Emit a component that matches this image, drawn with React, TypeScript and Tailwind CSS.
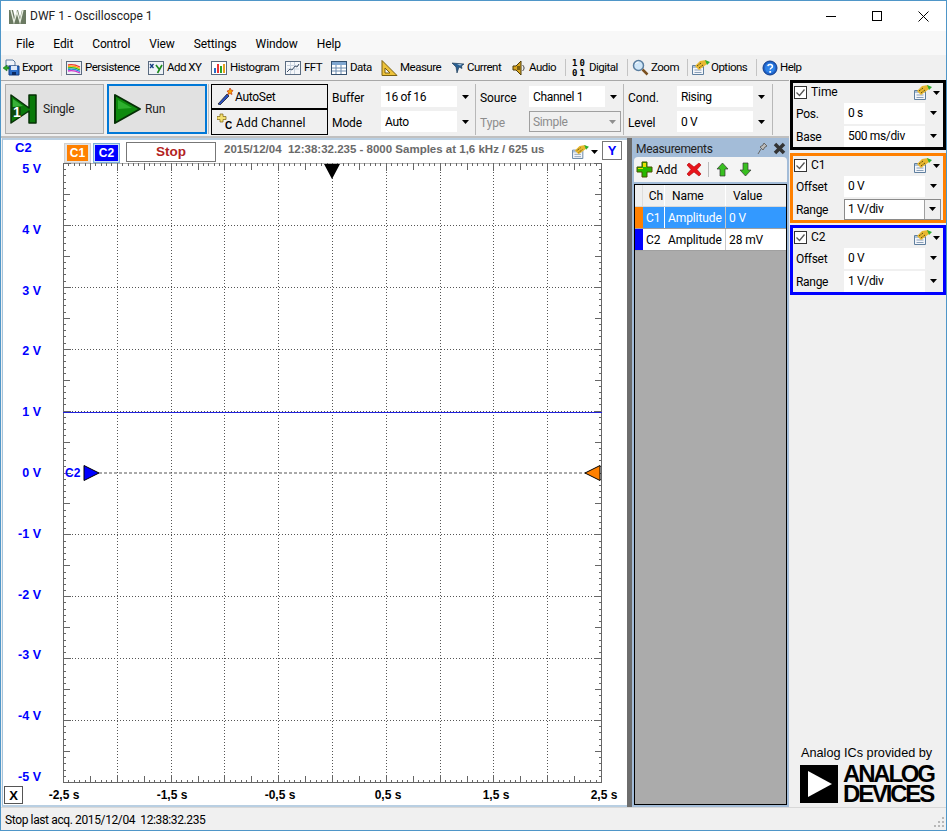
import React from "react";

const Arrow = () => (
  <svg width="7" height="4" viewBox="0 0 7 4"><path d="M0 0h7L3.500 4z" fill="#000" /></svg>
);

function Combo({ value, w = "w-[97px]", disabled = false, focus = false }: { value: string; w?: string; disabled?: boolean; focus?: boolean }) {
  return (
    <div className={`${w} h-[21px] flex items-center ${disabled ? "border border-[#a0a0a0] bg-[#f0f0f0]" : focus ? "border border-[#8a8a8a] bg-white" : "bg-white"}`}>
      <span className={`flex-1 whitespace-nowrap overflow-hidden ${disabled || focus ? "pl-[3px]" : "pl-[4px]"} text-[12px] leading-[18px] tracking-[-0.35px] ${disabled ? "text-[#8c8c8c]" : "text-black"}`}>{value}</span>
      <span className={`w-[16px] shrink-0 h-full flex items-center justify-center ${focus ? "border-l border-[#a0a0a0] bg-[#f0f0f0]" : disabled ? "opacity-40" : "bg-[#f0f0f0]"}`}>
        <Arrow />
      </span>
    </div>
  );
}

const Sep = () => <div className="w-px h-[17px] shrink-0 bg-[#c4c4c4]" />;

const OptionsIcon = ({ size = 18 }: { size?: number }) => (
  <svg width={size} height={Math.round((size * 15) / 18)} viewBox="0 0 18 15" className="shrink-0">
    <path d="M.5 5.500h11v9H.5z" fill="#f4f6fa" stroke="#5f7f9f" />
    <path d="M1 6h10v2H1z" fill="#a8bed6" />
    <path d="M2.500 10h7M2.500 12.500h7" stroke="#8aa0b8" />
    <path d="M3 6l5-5 6-1 1 4-4 3-4 3z" fill="#e8b830" />
    <path d="M5 6l4-3M7 8l4-3" stroke="#3c3208" strokeDasharray="1 1" />
    <path d="M13 0l5 2-3 3z" fill="#2fae2f" />
  </svg>
);

const ic: Record<string, React.ReactNode> = {
  export: (
    <svg width="17" height="17" viewBox="0 0 17 17">
      <path d="M3 1h7l2 2v4H3z" fill="#f2f5fa" stroke="#5c7ca0" />
      <path d="M6 7h10v9H6z" fill="#2a6cc8" stroke="#123c80" />
      <path d="M8 7h6v4H8z" fill="#dfe9f7" />
      <path d="M9 13h4v3H9z" fill="#0d2a60" />
      <path d="M0 9l4-3v2h2v2H4v2z" fill="#2aa52a" stroke="#0f5f0f" strokeWidth=".5" />
    </svg>
  ),
  persist: (
    <svg width="16" height="16" viewBox="0 0 16 16">
      <rect x=".5" y="1.500" width="15" height="13" fill="#eef1f5" stroke="#5a6b80" />
      <path d="M2 5c4-1 8 0 12 2" stroke="#e33" fill="none" strokeWidth="1.300" />
      <path d="M2 6.500c4-1 8 0 12 2" stroke="#fa0" fill="none" strokeWidth="1.300" />
      <path d="M2 8c4-1 8 0 12 2" stroke="#2b2" fill="none" strokeWidth="1.300" />
      <path d="M2 9.500c4-1 8 0 12 2" stroke="#28d" fill="none" strokeWidth="1.300" />
      <path d="M2 11c4-1 8 0 12 2" stroke="#c3c" fill="none" strokeWidth="1.300" />
    </svg>
  ),
  addxy: (
    <svg width="16" height="16" viewBox="0 0 16 16">
      <rect x=".5" y="1.500" width="15" height="13" fill="#eef2f7" stroke="#5a6b80" />
      <path d="M2 4l3.500 4M5.500 4L2 8" stroke="#123c80" strokeWidth="1.300" />
      <path d="M8 5l3 4M14 5l-4.500 8" stroke="#1c8a1c" strokeWidth="1.600" />
    </svg>
  ),
  hist: (
    <svg width="16" height="16" viewBox="0 0 16 16">
      <rect x=".5" y="1.500" width="15" height="13" fill="#fff" stroke="#5a6b80" />
      <path d="M3 8h2v5H3z" fill="#2a6cc8" />
      <path d="M6 4h2v9H6z" fill="#e33" />
      <path d="M9 6h2v7H9z" fill="#2aa52a" />
      <path d="M12 4h2v9h-2z" fill="#e8a020" />
    </svg>
  ),
  fft: (
    <svg width="16" height="16" viewBox="0 0 16 16">
      <rect x=".5" y="1.500" width="15" height="13" fill="#f5f7fa" stroke="#5a6b80" />
      <path d="M2 5.500h12M2 9h12M5.500 2v12M9.500 2v12" stroke="#c8d2de" />
      <path d="M2 12l3-3 2 1 3-4 2 1 2-3" stroke="#44546a" fill="none" />
    </svg>
  ),
  data: (
    <svg width="16" height="16" viewBox="0 0 16 16">
      <rect x=".5" y="1.500" width="15" height="13" fill="#fff" stroke="#34506e" />
      <path d="M1 2h14v3H1z" fill="#7fa6d0" />
      <path d="M1 8h14M1 11h14M5 5v9M10 5v9" stroke="#6c8cb0" />
    </svg>
  ),
  measure: (
    <svg width="17" height="16" viewBox="0 0 17 16">
      <path d="M1 .500v15h15z" fill="#edc23a" stroke="#7a6010" />
      <path d="M4 8v5h5z" fill="#f4f4f4" stroke="#7a6010" />
    </svg>
  ),
  current: (
    <svg width="14" height="14" viewBox="0 0 14 14">
      <path d="M1 2l12 1-2.500 2 .5 2.500-3-1.500-2 6-1-6z" fill="#2a5f92" stroke="#12304e" strokeWidth=".6" />
      <path d="M6 3l5 .500-2 1z" fill="#cfe4f4" />
    </svg>
  ),
  audio: (
    <svg width="14" height="16" viewBox="0 0 14 16">
      <path d="M1 6h3l5-5v14l-5-5H1z" fill="#d9a520" stroke="#4c3a08" />
      <path d="M10.500 5c2 2 2 4 0 6" stroke="#333" fill="none" />
      <path d="M5 6h3v4H5z" fill="#7c5f0e" />
    </svg>
  ),
  zoom: (
    <svg width="17" height="17" viewBox="0 0 17 17">
      <circle cx="6.500" cy="6.500" r="5" fill="#cfe6f8" stroke="#5a7ea0" strokeWidth="1.500" />
      <path d="M3.500 5a3.500 3.500 0 0 1 3-2" stroke="#fff" fill="none" />
      <path d="M10.500 10.500l5 5" stroke="#7a5020" strokeWidth="2.500" />
    </svg>
  ),
  help: (
    <svg width="16" height="16" viewBox="0 0 16 16">
      <circle cx="8" cy="8" r="7" fill="#1f62c9" stroke="#0f3c8a" />
      <circle cx="8" cy="8" r="5" fill="#2f83e8" />
      <path d="M5.800 6.200c.4-2.400 4.600-2.200 4.600.2 0 1.600-2.200 1.600-2.200 3.200" stroke="#fff" fill="none" strokeWidth="1.500" />
      <path d="M7.300 11h1.800v1.800H7.300z" fill="#fff" />
    </svg>
  ),
};

function Tool({ icon, label, w, cls, gap = "gap-[3px]" }: { icon: React.ReactNode; label: string; w: string; cls: string; gap?: string }) {
  return (
    <div className={`flex items-center ${gap} ${cls}`}>
      {icon}
      <span className={`${w} text-[11.5px] leading-none tracking-[-0.5px] text-black whitespace-nowrap`}>{label}</span>
    </div>
  );
}

function Checkbox() {
  return (
    <svg width="13" height="13" viewBox="0 0 13 13">
      <rect x=".5" y=".5" width="12" height="12" fill="#fff" stroke="#333" />
      <path d="M2.500 6.500l3 3 5-6" fill="none" stroke="#555" strokeWidth="1.300" />
    </svg>
  );
}

function ChannelPanel({ name, border, a, av, b, bv, focus }: { name: string; border: string; a: string; av: string; b: string; bv: string; focus?: boolean }) {
  return (
    <div className={`w-[156px] h-[70px] shrink-0 border-[3px] ${border} bg-[#f0f0f0] flex flex-col`}>
      <div className="h-[19px] flex items-center pl-[1px] pr-[3px]">
        <Checkbox />
        <span className="ml-[4px] -mt-[2px] flex-1 text-[12px] leading-none text-black">{name}</span>
        <OptionsIcon size={18} />
        <span className="ml-[1px]"><Arrow /></span>
      </div>
      <div className="flex items-center h-[22px] pl-[3px]">
        <span className="w-[48px] pt-[2px] text-[12px] leading-none tracking-[-0.3px] text-black">{a}</span>
        <Combo value={av} w="w-[97px]" />
      </div>
      <div className="flex items-center h-[22px] pl-[3px] mt-[1px]">
        <span className="w-[48px] pt-[1px] text-[12px] leading-none tracking-[-0.3px] text-black">{b}</span>
        <Combo value={bv} w="w-[97px]" focus={focus} />
      </div>
    </div>
  );
}

function Chart() {
  const W = 539;
  const H = 620;
  const dx = (W - 1) / 10;
  const dy = (H - 1) / 10;
  const ticks: string[] = [];
  const dots: string[] = [];
  for (let i = 0; i <= 100; i++) {
    const x = Math.round(i * (dx / 10)) + 0.5;
    const y = Math.round(i * (dy / 10)) + 0.5;
    const mj = i % 10 === 0;
    const l = mj ? 8 : i % 5 === 0 ? 7 : 3;
    ticks.push(`M${x} 0v${l}M${x} ${H}v-${l}M0 ${y}h${l}M${W} ${y}h-${l}`);
    if (mj && i > 0 && i < 100) {
      dots.push(`M${x} 0V${H}`);
      if (i !== 50) dots.push(`M0 ${y}H${W}`);
    }
  }
  return (
    <svg width={W} height={H} viewBox={`0 0 ${W} ${H}`} className="block">
      <path d={dots.join("")} stroke="#555" strokeDasharray="1 2" fill="none" />
      <path d={ticks.join("")} stroke="#666" fill="none" />
      <path d={`M0.500 0V${H - 0.5}H${W - 0.5}V0H0.500`} stroke="#666" fill="none" />
      <path d={`M0 249.500H${W}`} stroke="#2222dd" />
      <path d={`M36 310H${W - 16}`} stroke="#555" strokeDasharray="3 2" />
      <path d="M261 1h16l-8 15z" fill="#000" />
      <path d="M21 302.500l15 7.500-15 7.500z" fill="#0000ff" stroke="#000" />
      <path d="M537 302.500l-15 7.500 15 7.500z" fill="#ff8000" stroke="#000" />
    </svg>
  );
}

export default function App() {
  const yLabels = ["5 V", "4 V", "3 V", "2 V", "1 V", "0 V", "-1 V", "-2 V", "-3 V", "-4 V", "-5 V"];
  const xLabels = ["-2,5 s", "-1,5 s", "-0,5 s", "0,5 s", "1,5 s", "2,5 s"];
  return (
    <div className="w-[947px] h-[831px] flex flex-col bg-[#f0f0f0] border border-[#4f96c8] font-['Roboto',sans-serif] tracking-[-0.1px] overflow-hidden">
      {/* Title */}
      <div className="h-[30px] shrink-0 bg-white flex items-center pl-[8px]">
        <svg width="17" height="17" viewBox="0 0 17 17">
          <path d="M0 2h4l2 8 2-8h1l2 8 2-8h4v14H0z" fill="#6b7a62" />
          <path d="M2 2l3 12 3-10 3 10 3-12" fill="none" stroke="#e9efe2" strokeWidth="1.300" />
        </svg>
        <span className="ml-[4px] text-[12px] leading-none tracking-normal text-[#222]">DWF 1 - Oscilloscope 1</span>
        <div className="ml-auto flex items-center">
          <div className="w-[46px] h-[30px] flex items-center justify-center">
            <div className="w-[10px] h-px bg-black" />
          </div>
          <div className="w-[46px] h-[30px] flex items-center justify-center">
            <div className="w-[10px] h-[10px] border border-black" />
          </div>
          <div className="w-[46px] h-[30px] flex items-center justify-center">
            <svg width="11" height="11" viewBox="0 0 11 11"><path d="M.5.500l10 10M10.500.500l-10 10" stroke="#000" /></svg>
          </div>
        </div>
      </div>
      {/* Menu */}
      <div className="h-[24px] shrink-0 bg-[#f8f8f8] flex items-center pt-[1px] pl-[15px] gap-[19px] text-[12px] tracking-[-0.12px] text-black">
        {["File", "Edit", "Control", "View", "Settings", "Window", "Help"].map((m) => (
          <span key={m} className="leading-none">{m}</span>
        ))}
      </div>
      {/* Toolbar */}
      <div className="h-[25px] shrink-0 bg-[#f0f0f0] flex items-center pl-[2px]">
        <Tool icon={ic.export} label="Export" w="w-[29px]" cls="mr-[10px]" gap="gap-[2px]" />
        <Sep />
        <Tool icon={ic.persist} label="Persistence" w="w-[54px]" cls="ml-[4px] mr-[9px]" />
        <Tool icon={ic.addxy} label="Add XY" w="w-[36px]" cls="mr-[8px]" />
        <Tool icon={ic.hist} label="Histogram" w="w-[46px]" cls="mr-[9px]" />
        <Tool icon={ic.fft} label="FFT" w="w-[19px]" cls="mr-[8px]" />
        <Tool icon={ic.data} label="Data" w="w-[22px]" cls="mr-[9px]" />
        <Tool icon={ic.measure} label="Measure" w="w-[40px]" cls="mr-[11px]" gap="gap-[2px]" />
        <Tool icon={ic.current} label="Current" w="w-[34px]" cls="mr-[11px]" gap="gap-[2px]" />
        <Tool icon={ic.audio} label="Audio" w="w-[26px]" cls="mr-[10px]" />
        <Sep />
        <div className="flex items-center gap-[2px] mr-[10px] ml-[6px]">
          <div className="w-[15px] text-[9px] leading-[10px] font-bold tracking-[2px] font-['DejaVu_Sans_Mono',monospace] text-center">
            <div className="whitespace-nowrap">10</div>
            <div className="whitespace-nowrap">01</div>
          </div>
          <span className="w-[28px] text-[11.5px] leading-none tracking-[-0.5px]">Digital</span>
        </div>
        <Sep />
        <Tool icon={ic.zoom} label="Zoom" w="w-[26px]" cls="ml-[4px] mr-[10px]" gap="gap-[2px]" />
        <Sep />
        <Tool icon={<OptionsIcon size={18} />} label="Options" w="w-[35px]" cls="ml-[4px] mr-[10px]" gap="gap-[1px]" />
        <Sep />
        <Tool icon={ic.help} label="Help" w="w-[21px]" cls="ml-[5px]" gap="gap-[2px]" />
      </div>

      {/* Body */}
      <div className="flex-1 min-h-0 flex">
        <div className="w-[788px] shrink-0 flex flex-col">
          {/* Control strip */}
          <div className="h-[58px] shrink-0 flex items-center pt-[1px] pl-[4px] border-t border-[#a8a8a8] border-b-[2px] border-b-[#c0c0c0] bg-[#f0f0f0]">
            <div className="w-[99px] h-[50px] bg-[#e1e1e1] border border-[#adadad] flex items-center pl-[4px] gap-[5px]">
              <svg width="28" height="32" viewBox="0 0 28 32">
                <path d="M1 2l18 13V2h7v28h-7V18L1 30z" fill="#0a7a0a" stroke="#063006" strokeWidth="1.500" strokeLinejoin="round" />
                <path d="M3 6l10 7-10 1z" fill="#38b038" />
                <path d="M2 14h9v10H2z" fill="#0c4a0c" />
                <text x="3" y="24" fontSize="14" fontWeight="700" fill="#fff" fontFamily="Liberation Sans">1</text>
              </svg>
              <span className="text-[12px] leading-none tracking-[-0.2px] text-[#222]">Single</span>
            </div>
            <div className="ml-[3px] w-[100px] h-[50px] bg-[#e1e1e1] border-[2px] border-[#0078d7] flex items-center pl-[4px] gap-[3px]">
              <svg width="29" height="32" viewBox="0 0 29 32">
                <path d="M2 2l25 14L2 30z" fill="#0e8a0e" stroke="#063006" strokeWidth="2" strokeLinejoin="round" />
                <path d="M5 7l14 8-14 1z" fill="#2eb02e" />
              </svg>
              <span className="text-[12px] leading-none text-[#222]">Run</span>
            </div>
            <div className="ml-[1px] w-[1px] h-[50px] bg-[#c0c0c0]" />
            <div className="ml-[2px] w-[117px] h-[51px] border border-black bg-[#f0f0f0] flex flex-col">
              <div className="flex-1 flex items-center pl-[5px] gap-[1px] border-b-[2px] border-black">
                <svg width="17" height="18" viewBox="0 0 17 18">
                  <path d="M1 17L10 7l2 2-9 9z" fill="#2a4fc0" stroke="#111" strokeWidth=".7" />
                  <path d="M13 1l1 2 2 .5-1.500 2 .5 2-2-1-2 1 .3-2L10 4l2-.5z" fill="#f5a300" stroke="#c02000" strokeWidth=".6" />
                </svg>
                <span className="pt-[2px] text-[12px] leading-none tracking-[-0.3px]">AutoSet</span>
              </div>
              <div className="flex-1 flex items-center pl-[5px] gap-[4px]">
                <svg width="15" height="17" viewBox="0 0 15 17">
                  <path d="M3 1h3v2.500h3v3H6V9H3V6.500H0v-3h3z" fill="#f4e070" stroke="#7a6010" strokeWidth=".7" />
                  <text x="8" y="16" fontSize="10" fontWeight="700" fill="#000" fontFamily="Liberation Sans">C</text>
                </svg>
                <span className="pt-[2px] text-[12px] leading-none tracking-[0.15px]">Add Channel</span>
              </div>
            </div>
            <div className="ml-[2px] w-[146px] h-[51px] border-r border-[#b8b8b8] pl-[2px] flex flex-col justify-center gap-[4px]">
              <div className="flex items-center h-[21px]">
                <span className="w-[49px] pt-[2px] text-[12px] leading-none">Buffer</span>
                <Combo value="16 of 16" w="w-[92px]" />
              </div>
              <div className="flex items-center h-[21px]">
                <span className="w-[49px] pt-[2px] text-[12px] leading-none">Mode</span>
                <Combo value="Auto" w="w-[92px]" />
              </div>
            </div>
            <div className="w-[148px] h-[51px] border-r border-[#b8b8b8] pl-[4px] flex flex-col justify-center gap-[4px]">
              <div className="flex items-center h-[21px]">
                <span className="w-[49px] pt-[2px] text-[12px] leading-none">Source</span>
                <Combo value="Channel 1" w="w-[92px]" />
              </div>
              <div className="flex items-center h-[21px]">
                <span className="w-[49px] pt-[2px] text-[12px] leading-none text-[#8c8c8c]">Type</span>
                <Combo value="Simple" w="w-[92px]" disabled />
              </div>
            </div>
            <div className="w-[149px] h-[51px] border-r border-[#b8b8b8] pl-[4px] flex flex-col justify-center gap-[4px]">
              <div className="flex items-center h-[21px]">
                <span className="w-[49px] pt-[2px] text-[12px] leading-none">Cond.</span>
                <Combo value="Rising" w="w-[92px]" />
              </div>
              <div className="flex items-center h-[21px]">
                <span className="w-[49px] pt-[2px] text-[12px] leading-none">Level</span>
                <Combo value="0 V" w="w-[92px]" />
              </div>
            </div>
          </div>

          <div className="flex-1 min-h-0 flex">
            {/* Plot panel */}
            <div className="w-[625px] shrink-0 ml-px flex flex-col bg-white border-t-[2px] border-t-[#b9cfe2] border-l-[1px] border-l-[#a4c4dc] border-b-[2px] border-b-[#b9cfe2] font-['Liberation_Sans',sans-serif] tracking-normal">
              <div className="h-[23px] shrink-0 flex items-center">
                <span className="ml-[12px] -mt-[9px] w-[49px] text-[13px] font-bold text-[#0000ff] leading-none">C2</span>
                <span className="mt-[3px] w-[27px] h-[20px] bg-[#e4e4e4] border border-[#d0d0d0] flex items-center justify-center">
                  <span className="w-[21px] h-[16px] bg-[#ff8000] text-white text-[12px] font-bold flex items-center justify-center leading-none">C1</span>
                </span>
                <span className="mt-[3px] ml-[2px] w-[27px] h-[20px] border border-[#7ab0d8] bg-[#cfe2f2] flex items-center justify-center">
                  <span className="w-[23px] h-[16px] bg-[#0000ff] text-white text-[12px] font-bold flex items-center justify-center leading-none">C2</span>
                </span>
                <span className="ml-[6px] w-[90px] h-[20px] border border-[#777] text-[#b22222] text-[13.5px] font-bold flex items-center justify-center leading-none">Stop</span>
                <span className="ml-[8px] -mt-[4px] text-[11.5px] font-bold text-[#6a6a6a] leading-none whitespace-pre">2015/12/04  12:38:32.235 - 8000 Samples at 1,6 kHz / 625 us</span>
                <span className="ml-auto"><OptionsIcon size={17} /></span>
                <span className="ml-[2px]"><Arrow /></span>
                <span className="ml-[4px] mr-[5px] -mt-[3px] w-[20px] h-[19px] border border-[#777] text-[#0000ff] text-[13px] font-bold flex items-center justify-center leading-none">Y</span>
              </div>
              <div className="flex h-[620px] shrink-0">
                <div className="w-[38px] h-[624px] -mt-[2px] flex flex-col justify-between items-end text-[12.5px] font-bold text-[#0000ff]">
                  {yLabels.map((l) => (
                    <span key={l} className="h-[16px] leading-[16px] whitespace-nowrap">{l}</span>
                  ))}
                </div>
                <div className="ml-[22px] relative">
                  <Chart />
                  <span className="absolute left-[2px] top-[303px] text-[12px] font-bold text-[#0000ff] leading-[15px]">C2</span>
                </div>
              </div>
              <div className="flex items-start mt-[3px]">
                <span className="ml-px w-[19px] h-[18px] border border-[#555] text-[13px] font-bold flex items-center justify-center leading-none">X</span>
                <div className="ml-[23px] mt-[2px] flex gap-[72px] text-[12px] font-bold text-black">
                  {xLabels.map((l) => (
                    <span key={l} className="w-[36px] text-center leading-[14px] whitespace-nowrap">{l}</span>
                  ))}
                </div>
              </div>
            </div>
            <div className="w-[5px] shrink-0 bg-[#6d6d6d]" />
            {/* Measurements */}
            <div className="flex-1 min-w-0 flex flex-col bg-[#a3bcd8] px-[2px] pb-[2px]">
              <div className="h-[19px] shrink-0 flex items-center pl-[2px] pr-[1px] pt-[2px]">
                <span className="flex-1 text-[12px] leading-none tracking-[-0.3px] text-[#222]">Measurements</span>
                <svg width="11" height="13" viewBox="0 0 11 13"><path d="M7 1l3 3-2 1-2 3-3-3 3-2zM4 7l-3 5" stroke="#666" fill="#bbb" /></svg>
                <svg className="ml-[5px]" width="13" height="13" viewBox="0 0 13 13"><path d="M2 2l9 9M11 2l-9 9" stroke="#333" strokeWidth="3.500" /></svg>
              </div>
              <div className="h-[25px] shrink-0 bg-[#f4f4f4] rounded-t-[4px] flex items-center pl-[2px]">
                <svg width="17" height="17" viewBox="0 0 17 17"><path d="M6 1h5v5h5v5h-5v5H6v-5H1V6h5z" fill="#27b800" stroke="#4a5000" /><path d="M7 2h3v4H7zM2 7h5v1H2z" fill="#e8e000" /></svg>
                <span className="ml-[3px] text-[12px] leading-none text-black">Add</span>
                <svg className="ml-[9px]" width="16" height="15" viewBox="0 0 16 15"><path d="M3 1l5 4 5-4 2 2-4 4.500 4 4.500-2 2-5-4-5 4-2-2 4-4.500-4-4.500z" fill="#e8141c" stroke="#a00" strokeWidth=".6" /></svg>
                <div className="w-px h-[15px] bg-[#bbb] ml-[6px]" />
                <svg className="ml-[7px]" width="13" height="15" viewBox="0 0 13 15"><path d="M6.500 1l5.500 6H9v7H4V7H1z" fill="#38c020" stroke="#333" strokeWidth=".7" /></svg>
                <svg className="ml-[10px]" width="13" height="15" viewBox="0 0 13 15"><path d="M6.500 14L1 8h3V1h5v7h3z" fill="#38c020" stroke="#333" strokeWidth=".7" /></svg>
              </div>
              <div className="mt-[2px] flex-1 min-h-0 bg-[#ababab] border border-black">
                <div className="h-[22px] flex bg-[#f0f0f0] border-b border-[#d8d8d8] text-[12px] leading-none text-black">
                  <div className="w-[8px] border-r border-[#ddd]" />
                  <div className="w-[22px] flex items-center justify-end pr-px border-r border-white">Ch</div>
                  <div className="w-[61px] flex items-center pl-[7px] border-r border-white">Name</div>
                  <div className="flex-1 flex items-center pl-[7px]">Value</div>
                </div>
                {[
                  { c: "bg-[#ff8000]", ch: "C1", v: "0 V", sel: true },
                  { c: "bg-[#0000ff]", ch: "C2", v: "28 mV", sel: false },
                ].map((r) => (
                  <div key={r.ch} className={`h-[22px] flex text-[12px] leading-none border-b border-[#a0a0a0] ${r.sel ? "bg-[#3399ff] text-white" : "bg-white text-black"}`}>
                    <div className={`w-[8px] ${r.c}`} />
                    <div className="w-[22px] flex items-center pl-[3px] border-r border-white">{r.ch}</div>
                    <div className="w-[61px] flex items-center pl-[3px] border-r border-[#c8c8c8]">Amplitude</div>
                    <div className="flex-1 flex items-center pl-[3px]">{r.v}</div>
                  </div>
                ))}
              </div>
            </div>
          </div>
        </div>

        {/* Right column */}
        <div className="flex-1 min-w-0 flex flex-col pl-px">
          <ChannelPanel name="Time" border="border-black" a="Pos." av="0 s" b="Base" bv="500 ms/div" />
          <div className="h-[3px] shrink-0" />
          <ChannelPanel name="C1" border="border-[#ff8000]" a="Offset" av="0 V" b="Range" bv="1 V/div" focus />
          <div className="h-[2px] shrink-0" />
          <ChannelPanel name="C2" border="border-[#0000ff]" a="Offset" av="0 V" b="Range" bv="1 V/div" />
          <div className="mt-auto pb-[3px] flex flex-col items-start pl-[10px]">
            <span className="ml-px text-[12.7px] leading-[18px] tracking-normal text-black font-['Liberation_Sans',sans-serif] whitespace-nowrap">Analog ICs provided by</span>
            <div className="mt-[2px] flex items-center">
              <div className="w-[38px] h-[38px] bg-black flex items-center justify-center">
                <svg className="ml-[2px]" width="24" height="26" viewBox="0 0 24 26"><path d="M0 0l24 13L0 26z" fill="#fff" /></svg>
              </div>
              <div className="ml-[5px] font-['Liberation_Sans',sans-serif] font-bold text-[24px] leading-[20px] tracking-[-2.2px] text-black">
                <div>ANALOG</div>
                <div>DEVICES</div>
              </div>
            </div>
          </div>
        </div>
      </div>

      {/* Status */}
      <div className="h-[23px] shrink-0 border-t border-[#d8d8d8] bg-[#f0f0f0] flex items-center pt-[1px] pl-[4px] relative">
        <span className="text-[12px] leading-none tracking-[-0.38px] text-black whitespace-pre">Stop last acq. 2015/12/04  12:38:32.235</span>
        <svg className="absolute right-[1px] bottom-[2px]" width="12" height="12" viewBox="0 0 12 12">
          <path d="M9 1h2v2H9zM5 5h2v2H5zM9 5h2v2H9zM1 9h2v2H1zM5 9h2v2H5zM9 9h2v2H9z" fill="#b8b8b8" />
        </svg>
      </div>
    </div>
  );
}
